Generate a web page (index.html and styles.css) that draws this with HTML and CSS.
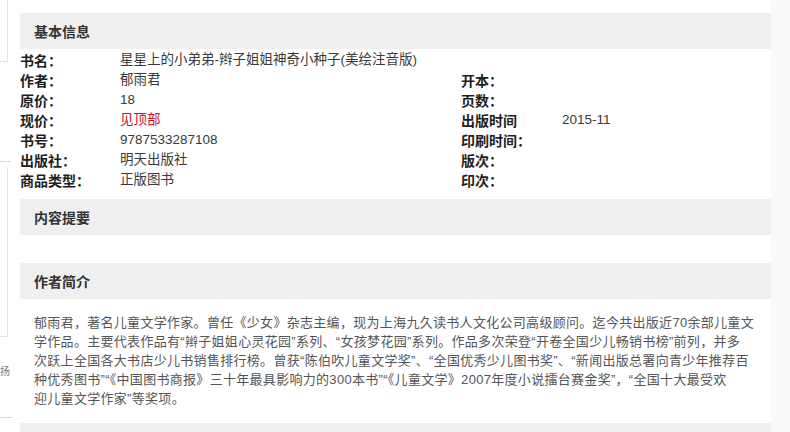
FILE: index.html
```html
<!DOCTYPE html>
<html lang="zh-CN">
<head>
<meta charset="utf-8">
<title>图书详情</title>
<link rel="stylesheet" href="styles.css">
</head>
<body>
<div class="page">
  <aside class="side">
    <div class="side-box side-box-top"></div>
    <div class="side-rule side-rule-a"></div>
    <div class="side-box side-box-mid"></div>
    <div class="side-text">扬</div>
    <div class="side-rule side-rule-b"></div>
  </aside>

  <main class="main">
    <section class="block">
      <h2 class="block-title">基本信息</h2>
      <div class="info">
        <div class="info-row">
          <span class="label">书名：</span>
          <span class="value value-wide">星星上的小弟弟-辫子姐姐神奇小种子(美绘注音版)</span>
        </div>
        <div class="info-row">
          <span class="label">作者：</span>
          <span class="value">郁雨君</span>
          <span class="label">开本：</span>
          <span class="value"></span>
        </div>
        <div class="info-row">
          <span class="label">原价：</span>
          <span class="value">18</span>
          <span class="label">页数：</span>
          <span class="value"></span>
        </div>
        <div class="info-row">
          <span class="label">现价：</span>
          <span class="value value-red">见顶部</span>
          <span class="label">出版时间</span>
          <span class="value">2015-11</span>
        </div>
        <div class="info-row">
          <span class="label">书号：</span>
          <span class="value">9787533287108</span>
          <span class="label">印刷时间：</span>
          <span class="value"></span>
        </div>
        <div class="info-row">
          <span class="label">出版社：</span>
          <span class="value">明天出版社</span>
          <span class="label">版次：</span>
          <span class="value"></span>
        </div>
        <div class="info-row">
          <span class="label">商品类型：</span>
          <span class="value">正版图书</span>
          <span class="label">印次：</span>
          <span class="value"></span>
        </div>
      </div>
    </section>

    <section class="block">
      <h2 class="block-title">内容提要</h2>
      <div class="empty-body"></div>
    </section>

    <section class="block">
      <h2 class="block-title">作者简介</h2>
      <p class="para">郁雨君，著名儿童文学作家。曾任《少女》杂志主编，现为上海九久读书人文化公司高级顾问。迄今共出版近70余部儿童文<br>学作品。主要代表作品有“辫子姐姐心灵花园”系列、“女孩梦花园”系列。作品多次荣登“开卷全国少儿畅销书榜”前列，并多<br>次跃上全国各大书店少儿书销售排行榜。曾获“陈伯吹儿童文学奖”、“全国优秀少儿图书奖”、“新闻出版总署向青少年推荐百<br>种优秀图书”“《中国图书商报》三十年最具影响力的300本书”“《儿童文学》2007年度小说擂台赛金奖”，“全国十大最受欢<br>迎儿童文学作家”等奖项。</p>
    </section>

    <section class="block">
      <h2 class="block-title block-title-cut"></h2>
    </section>
  </main>

  <div class="gutter"></div>
</div>
</body>
</html>
```

FILE: styles.css
```css
html, body {
  margin: 0;
  padding: 0;
  background: #ffffff;
}

body {
  font-family: "Liberation Sans", "Noto Sans CJK SC", sans-serif;
  color: #333333;
  overflow: hidden;
}

.page {
  display: flex;
  width: 790px;
  height: 432px;
  overflow: hidden;
}

/* left sidebar fragments */
.side {
  width: 20px;
  flex: 0 0 20px;
  display: flex;
  flex-direction: column;
}

.side-box {
  width: 7px;
  border-right: 1px solid #e2e2e2;
  border-bottom: 1px solid #e2e2e2;
}

.side-box-top {
  height: 61px;
}

.side-rule {
  height: 1px;
  background: #d6d6d6;
}

.side-rule-a {
  width: 11px;
  margin-top: 99px;
}

.side-box-mid {
  height: 169px;
  margin-top: 5px;
}

.side-text {
  width: 12px;
  height: 16px;
  margin-top: 26px;
  font-family: "Noto Sans CJK SC", sans-serif;
  font-size: 10px;
  line-height: 16px;
  color: #777777;
}

.side-rule-b {
  width: 12px;
  margin-top: 38px;
}

/* main column */
.main {
  width: 751px;
  flex: 0 0 751px;
  padding-top: 13px;
}

.block-title {
  margin: 0;
  height: 36px;
  line-height: 36px;
  padding-left: 14px;
  background: #efefef;
  font-family: "Noto Sans CJK SC", sans-serif;
  font-size: 14px;
  font-weight: 700;
  color: #333333;
}

.info {
  padding: 1px 0 9px;
}

.info-row {
  display: grid;
  grid-template-columns: 100px 341px 101px 1fr;
  height: 20px;
  align-items: center;
}

.label {
  font-family: "Noto Sans CJK SC", sans-serif;
  font-size: 14px;
  font-weight: 700;
  color: #1e1e1e;
  line-height: 20px;
  white-space: nowrap;
}

.value {
  font-size: 13.5px;
  line-height: 20px;
  color: #3a3a3a;
  white-space: nowrap;
}

.value-wide {
  grid-column: 2 / 5;
}

.value-red {
  color: #cc1122;
}

.empty-body {
  height: 28px;
}

.para {
  margin: 0;
  padding: 14px 10px 15px 14px;
  font-size: 13px;
  letter-spacing: 0.3px;
  line-height: 19px;
  color: #555555;
  white-space: nowrap;
}

.block-title-cut {
  height: 20px;
}

.gutter {
  flex: 1 1 auto;
  background: #fafafa;
}
```
